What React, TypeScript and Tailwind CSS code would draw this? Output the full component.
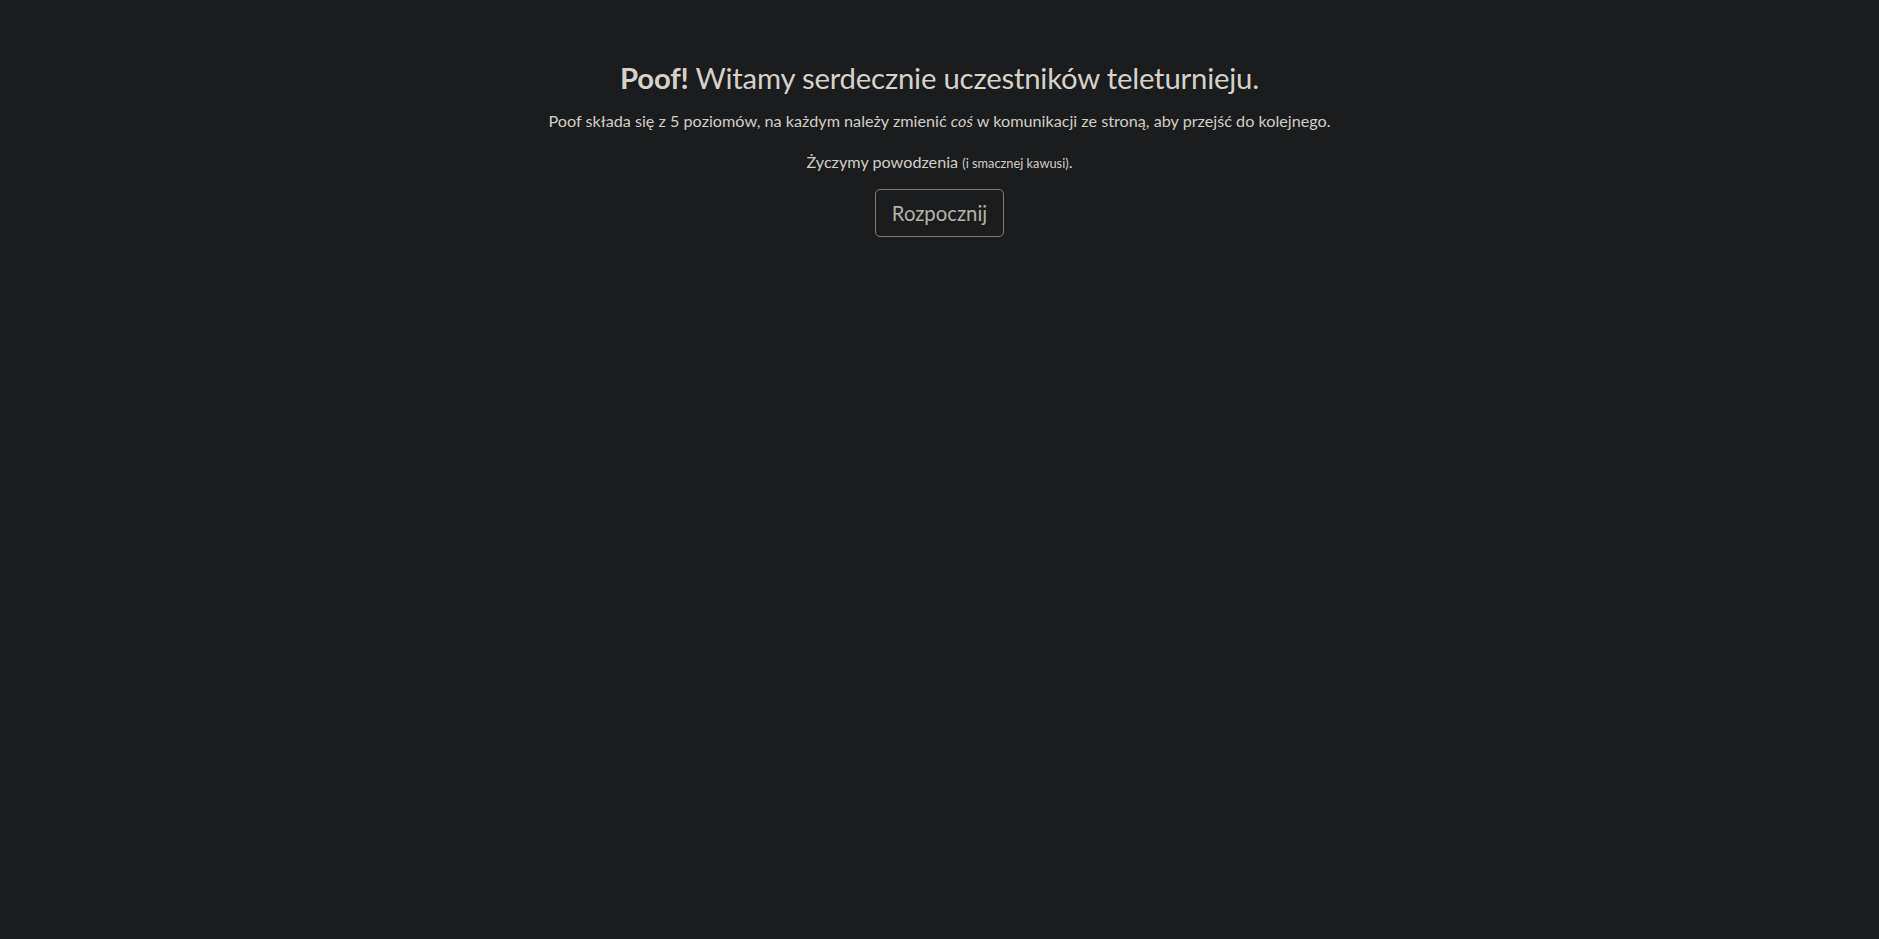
export default function App() {
  return (
    <div className="min-h-screen w-full bg-[#1b1c1e] font-['Lato','Open_Sans',sans-serif] text-[#d3cfc7]">
      <div className="flex flex-col items-center pt-[60px] text-center">
        {/* Heading */}
        <h1 className="text-[29.3px] leading-[1.2] font-normal tracking-[-0.2px] text-[#d6d2ca]">
          <span className="font-bold">Poof!</span> Witamy serdecznie uczestników teleturnieju.
        </h1>

        <p className="mt-[14px] text-[16.2px] leading-[1.5]">
          Poof składa się z 5 poziomów, na każdym należy zmienić <em>coś</em> w komunikacji ze stroną, aby przejść do kolejnego.
        </p>

        <p className="mt-[16.5px] text-[16.2px] leading-[1.5]">
          Życzymy powodzenia <small className="text-[12.8px]">(i smacznej kawusi)</small>.
        </p>

        <button
          type="button"
          className="mt-[14.5px] h-12 w-[129px] rounded-[5px] border border-[#847c70] bg-transparent text-[20.3px] text-[#b7b1a7]"
        >
          Rozpocznij
        </button>
      </div>
    </div>
  )
}
